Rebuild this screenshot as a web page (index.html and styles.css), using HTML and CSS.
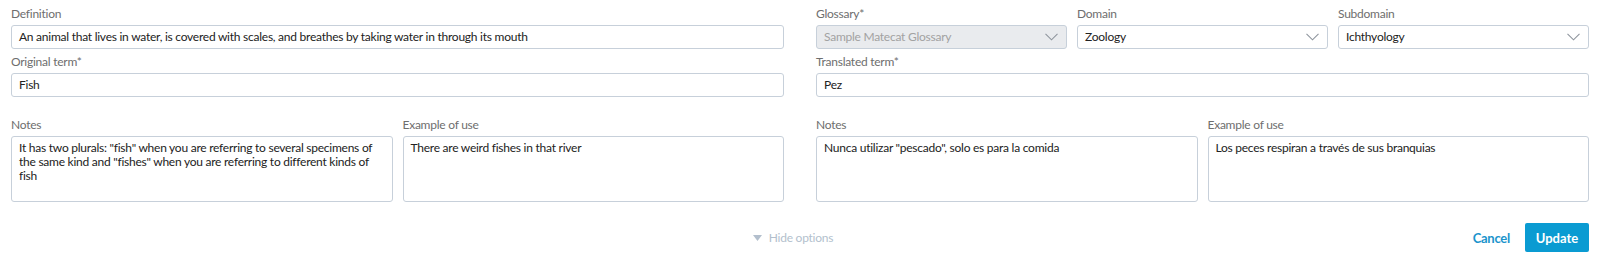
FILE: index.html
```html
<!DOCTYPE html>
<html lang="en">
<head>
    <meta charset="UTF-8">
    <title>Glossary term</title>
    <link rel="stylesheet" href="styles.css">
</head>
<body>
    <div class="term-form">
        <div class="side">
            <div class="field">
                <label>Definition</label>
                <div class="control">An animal that lives in water, is covered with scales, and breathes by taking water in through its mouth</div>
            </div>
            <div class="field">
                <label>Original term*</label>
                <div class="control">Fish</div>
            </div>
            <div class="pair">
                <div class="field">
                    <label>Notes</label>
                    <div class="control area">It has two plurals: "fish" when you are referring to several specimens of the same kind and "fishes" when you are referring to different kinds of fish</div>
                </div>
                <div class="field">
                    <label>Example of use</label>
                    <div class="control area">There are weird fishes in that river</div>
                </div>
            </div>
        </div>

        <div class="side">
            <div class="triple">
                <div class="field">
                    <label>Glossary*</label>
                    <div class="control select disabled">
                        <span>Sample Matecat Glossary</span>
                        <svg class="chevron" width="13" height="8" viewBox="0 0 13 8"><path d="M0.5 0.8 L6.5 6.8 L12.5 0.8" fill="none" stroke="#8f969e" stroke-width="1.1"/></svg>
                    </div>
                </div>
                <div class="field">
                    <label>Domain</label>
                    <div class="control select">
                        <span>Zoology</span>
                        <svg class="chevron" width="13" height="8" viewBox="0 0 13 8"><path d="M0.5 0.8 L6.5 6.8 L12.5 0.8" fill="none" stroke="#8f969e" stroke-width="1.1"/></svg>
                    </div>
                </div>
                <div class="field">
                    <label>Subdomain</label>
                    <div class="control select">
                        <span>Ichthyology</span>
                        <svg class="chevron" width="13" height="8" viewBox="0 0 13 8"><path d="M0.5 0.8 L6.5 6.8 L12.5 0.8" fill="none" stroke="#8f969e" stroke-width="1.1"/></svg>
                    </div>
                </div>
            </div>
            <div class="field">
                <label>Translated term*</label>
                <div class="control">Pez</div>
            </div>
            <div class="pair">
                <div class="field">
                    <label>Notes</label>
                    <div class="control area">Nunca utilizar "pescado", solo es para la comida</div>
                </div>
                <div class="field">
                    <label>Example of use</label>
                    <div class="control area">Los peces respiran a través de sus branquias</div>
                </div>
            </div>
        </div>
    </div>

    <div class="form-footer">
        <div></div>
        <a class="toggle-options">
            <svg class="caret" width="9" height="6" viewBox="0 0 9 6"><path d="M0 0 H9 L4.5 6 Z" fill="#b3bfcd"/></svg>
            Hide options
        </a>
        <div class="actions">
            <a class="cancel">Cancel</a>
            <button class="update">Update</button>
        </div>
    </div>
</body>
</html>
```

FILE: styles.css
```css
body {
    margin: 0;
    font-family: Lato, "Open Sans", sans-serif;
    font-size: 12px;
    letter-spacing: -0.25px;
    color: #222;
    background-color: white;
}
.term-form {
    display: grid;
    grid-template-columns: 1fr 1fr;
    column-gap: 32px;
    padding: 6px 11px 0;
}
.side {
    display: flex;
    flex-direction: column;
    min-width: 0;
}
.field {
    min-width: 0;
}
.side > * + * {
    margin-top: 5px;
}
.field label {
    display: block;
    line-height: 16px;
    margin-bottom: 3px;
    color: #6e6e6e;
}
.control {
    box-sizing: border-box;
    height: 24px;
    padding: 0 7px;
    line-height: 22px;
    border: 1px solid #c7d0da;
    border-radius: 3px;
    white-space: nowrap;
    overflow: hidden;
}
.select {
    display: flex;
    align-items: center;
    justify-content: space-between;
    padding-right: 8px;
}
.select.disabled {
    background-color: #e9ebee;
    color: #a2a2a2;
}
.chevron {
    flex: none;
}
.triple {
    display: grid;
    grid-template-columns: 1fr 1fr 1fr;
    column-gap: 10px;
}
.side > .pair {
    display: grid;
    grid-template-columns: 1fr 1fr;
    column-gap: 10px;
    margin-top: 20px;
}
.area {
    height: 66px;
    padding: 4px 7px;
    line-height: 14px;
    white-space: normal;
}
.form-footer {
    display: grid;
    grid-template-columns: 1fr auto 1fr;
    align-items: center;
    padding: 21px 11px 0;
}
.toggle-options {
    display: flex;
    align-items: center;
    gap: 7px;
    color: #b3bfcd;
    font-size: 12px;
    padding-right: 14px;
}
.caret {
    flex: none;
}
.actions {
    display: flex;
    justify-content: flex-end;
    align-items: center;
    gap: 15px;
}
.cancel {
    color: #1b94cc;
    font-weight: bold;
    font-size: 13px;
}
.update {
    background-color: #0a9bd2;
    color: white;
    border: none;
    border-radius: 2px;
    height: 29px;
    width: 64px;
    font-family: inherit;
    font-weight: bold;
    font-size: 13px;
    letter-spacing: 0;
    padding: 0;
}
```
